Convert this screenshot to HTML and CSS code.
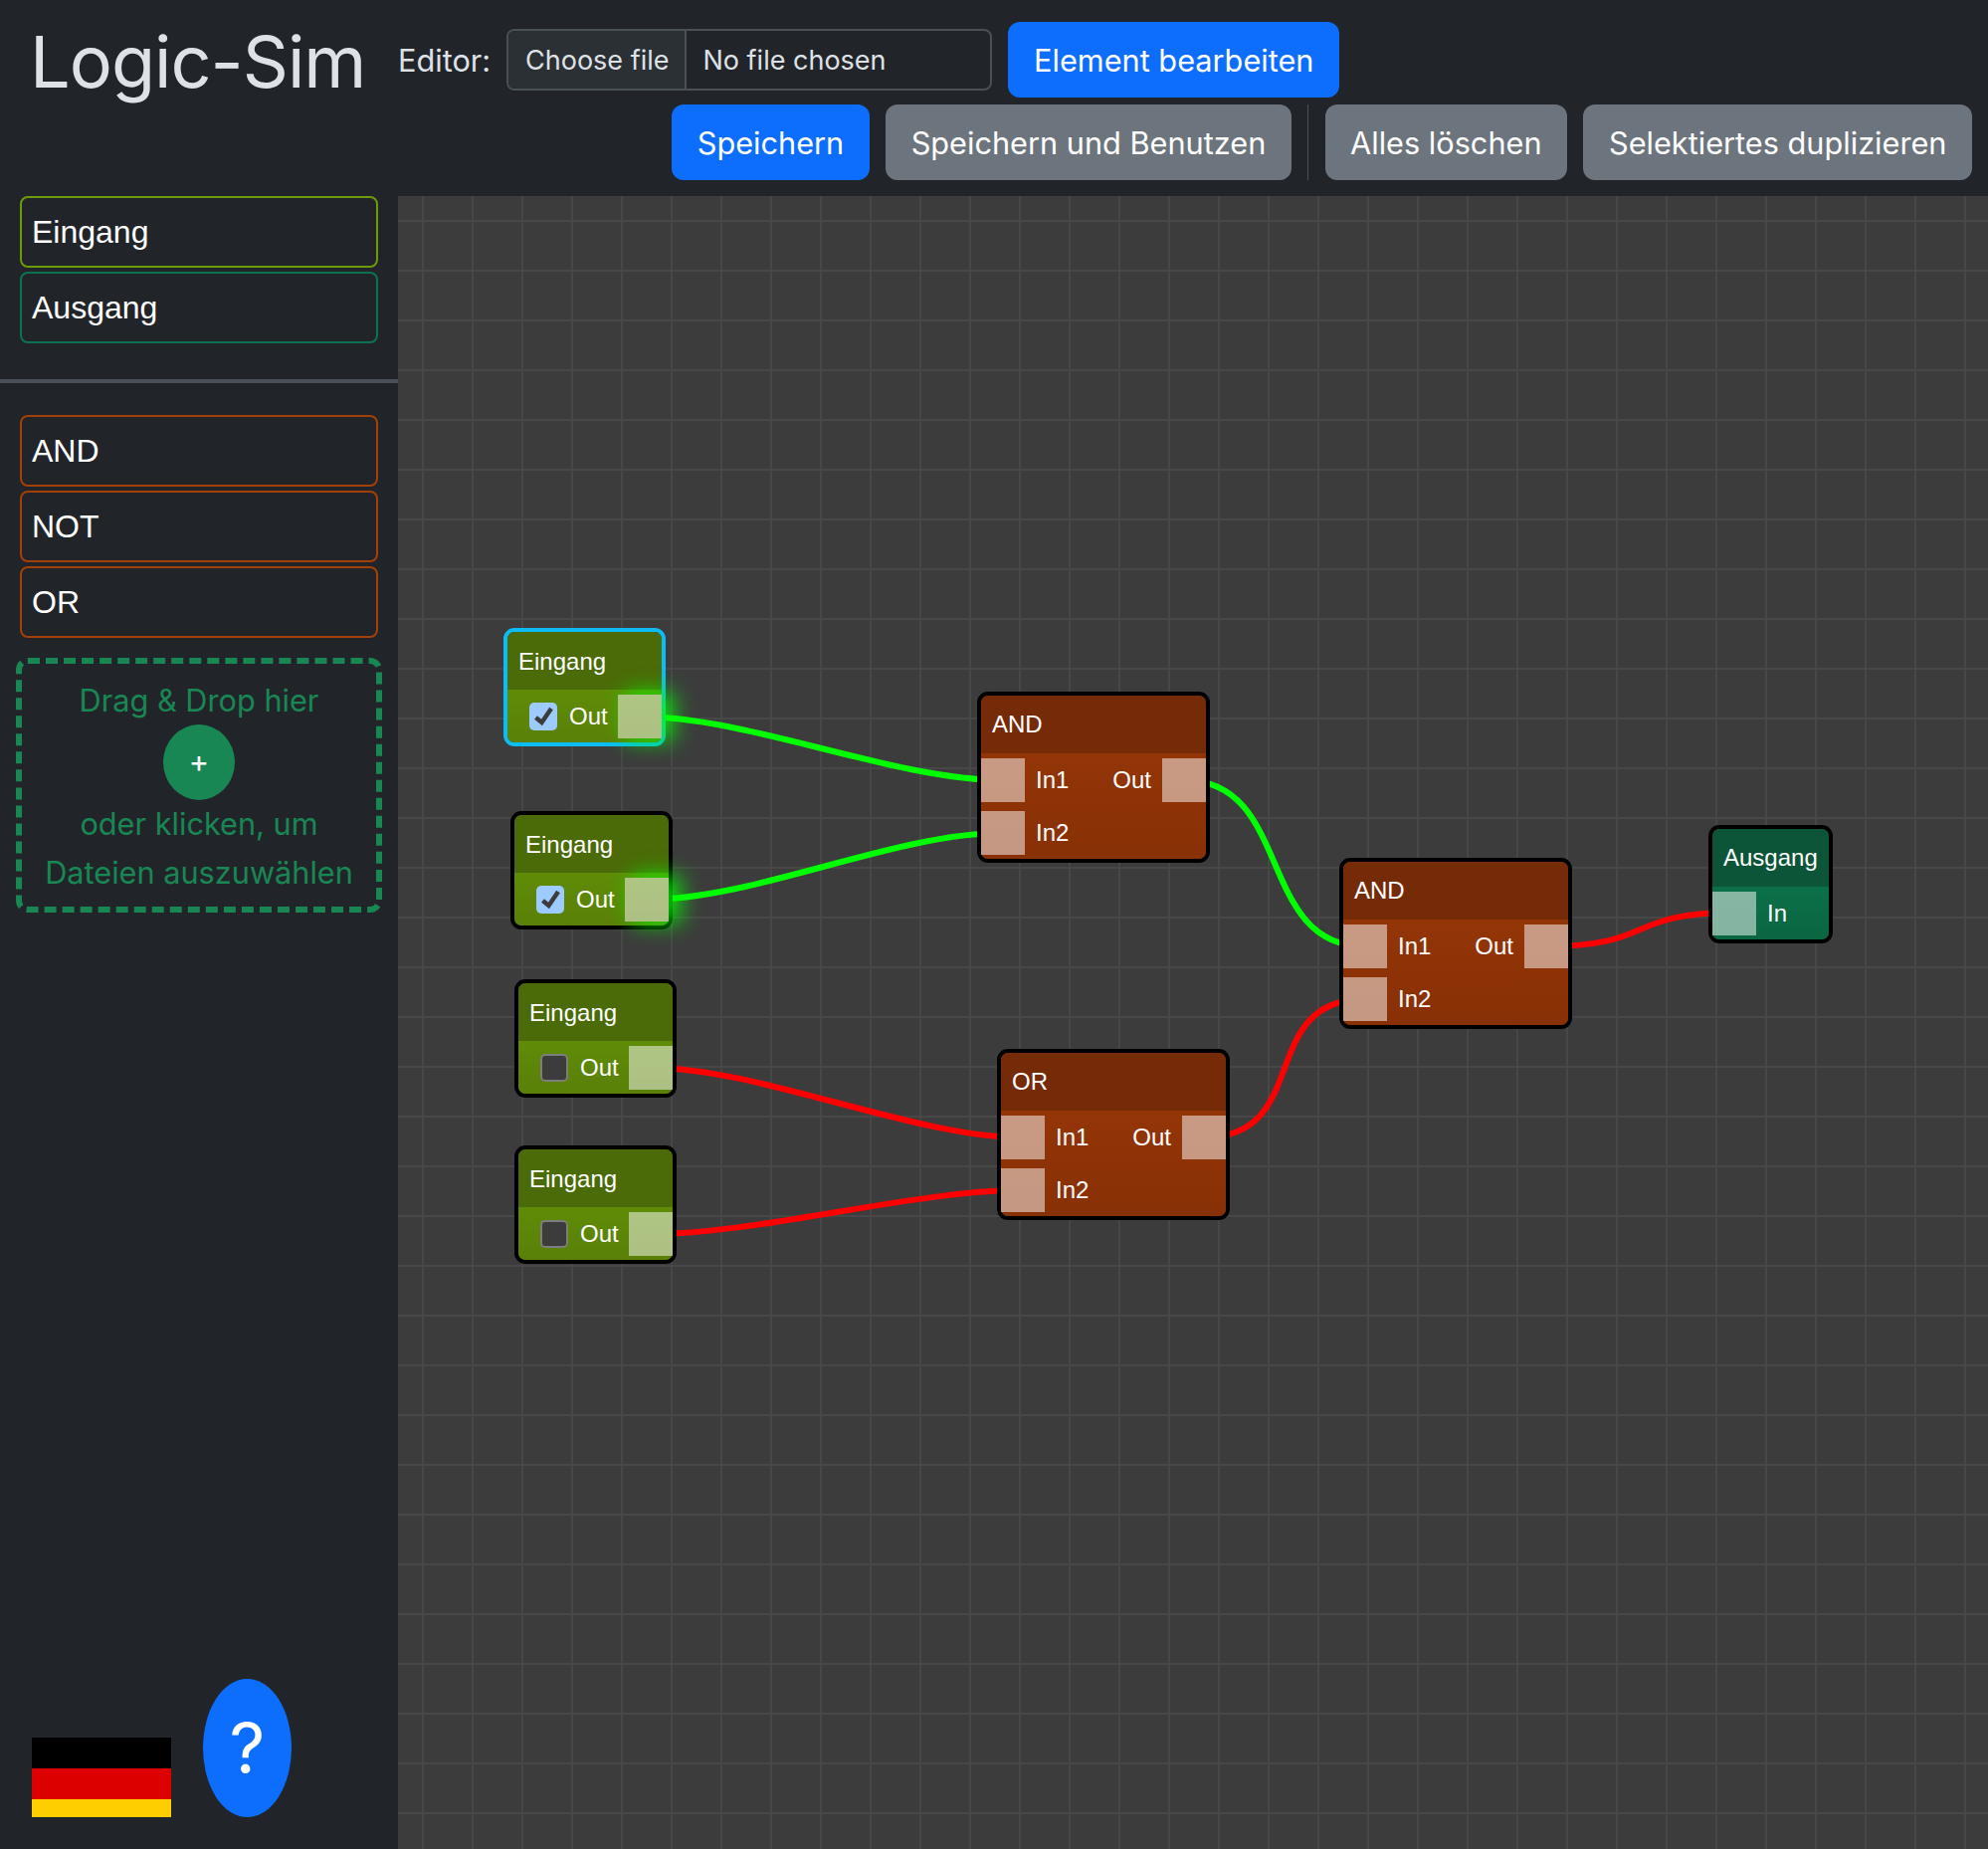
FILE: index.html
```html
<!DOCTYPE html>
<html lang="en">

<head>
    <meta charset="UTF-8">
    <meta name="viewport" content="width=device-width, initial-scale=1.0">
    <title>Logic-Sim</title>
    <link rel="stylesheet" href="styles.css">
</head>

<body>
    <header class="topbar">
        <h1 class="brand">Logic-Sim</h1>
        <div class="toolbar">
            <div class="toolbar-row">
                <span class="editor-label">Editor:</span>
                <div class="file-input">
                    <span class="file-button">Choose file</span>
                    <span class="file-name">No file chosen</span>
                </div>
                <button class="btn btn-primary" type="button">Element bearbeiten</button>
            </div>
            <div class="toolbar-row toolbar-row-end">
                <button class="btn btn-primary" type="button">Speichern</button>
                <button class="btn btn-secondary" type="button">Speichern und Benutzen</button>
                <span class="toolbar-sep"></span>
                <button class="btn btn-secondary" type="button">Alles löschen</button>
                <button class="btn btn-secondary" type="button">Selektiertes duplizieren</button>
            </div>
        </div>
    </header>

    <main class="workspace">
        <aside class="sidebar">
            <div class="palette">
                <div class="palette-item item-input">Eingang</div>
                <div class="palette-item item-output">Ausgang</div>
            </div>
            <hr class="sidebar-rule">
            <div class="palette">
                <div class="palette-item item-gate">AND</div>
                <div class="palette-item item-gate">NOT</div>
                <div class="palette-item item-gate">OR</div>
            </div>
            <div class="dropzone">
                <span>Drag &amp; Drop hier</span>
                <span class="dropzone-plus">+</span>
                <span>oder klicken, um</span>
                <span class="dropzone-last">Dateien auszuwählen</span>
            </div>
            <div class="sidebar-footer">
                <svg class="flag" viewBox="0 0 140 80" role="img" aria-label="Deutsch">
                    <rect width="140" height="31" fill="#000"></rect>
                    <rect y="31" width="140" height="31" fill="#dd0000"></rect>
                    <rect y="62" width="140" height="18" fill="#ffce00"></rect>
                </svg>
                <button class="help" type="button">?</button>
            </div>
        </aside>

        <section class="canvas">
            <svg class="wires" width="1598" height="1661">
                <!-- canvas starts at 400,197 -->
                <g transform="translate(-400 -197)">
                    <path class="wire wire-on" d="M643 720 C753 720 898 784 1008 784"></path>
                    <path class="wire wire-on" d="M650 904 C760 904 898 837 1008 837"></path>
                    <path class="wire wire-off" d="M654 1073 C764 1073 918 1143 1028 1143"></path>
                    <path class="wire wire-off" d="M654 1240 C764 1240 918 1196 1028 1196"></path>
                    <path class="wire wire-on" d="M1190 784 C1300 784 1262 951 1372 951"></path>
                    <path class="wire wire-off" d="M1210 1143 C1320 1143 1262 1004 1372 1004"></path>
                    <path class="wire wire-off" d="M1554 951 C1664 951 1633 917 1743 917"></path>
                </g>
            </svg>

            <div class="node node-input node-selected" id="input-1">
                <div class="node-title">Eingang</div>
                <div class="node-body">
                    <div class="node-row row-input">
                        <span class="check check-on"><svg viewBox="0 0 28 28"><path d="M6.5 15l6 5 9.5-14"></path></svg></span>
                        <span class="port-label">Out</span>
                        <span class="port port-right port-on"></span>
                    </div>
                </div>
            </div>

            <div class="node node-input" id="input-2">
                <div class="node-title">Eingang</div>
                <div class="node-body">
                    <div class="node-row row-input">
                        <span class="check check-on"><svg viewBox="0 0 28 28"><path d="M6.5 15l6 5 9.5-14"></path></svg></span>
                        <span class="port-label">Out</span>
                        <span class="port port-right port-on"></span>
                    </div>
                </div>
            </div>

            <div class="node node-input" id="input-3">
                <div class="node-title">Eingang</div>
                <div class="node-body">
                    <div class="node-row row-input">
                        <span class="check"></span>
                        <span class="port-label">Out</span>
                        <span class="port port-right"></span>
                    </div>
                </div>
            </div>

            <div class="node node-input" id="input-4">
                <div class="node-title">Eingang</div>
                <div class="node-body">
                    <div class="node-row row-input">
                        <span class="check"></span>
                        <span class="port-label">Out</span>
                        <span class="port port-right"></span>
                    </div>
                </div>
            </div>

            <div class="node node-gate" id="gate-and-1">
                <div class="node-title">AND</div>
                <div class="node-body">
                    <div class="node-row">
                        <span class="port"></span>
                        <span class="port-label label-in">In1</span>
                        <span class="port-label label-out">Out</span>
                        <span class="port"></span>
                    </div>
                    <div class="node-row">
                        <span class="port"></span>
                        <span class="port-label label-in">In2</span>
                    </div>
                </div>
            </div>

            <div class="node node-gate" id="gate-or">
                <div class="node-title">OR</div>
                <div class="node-body">
                    <div class="node-row">
                        <span class="port"></span>
                        <span class="port-label label-in">In1</span>
                        <span class="port-label label-out">Out</span>
                        <span class="port"></span>
                    </div>
                    <div class="node-row">
                        <span class="port"></span>
                        <span class="port-label label-in">In2</span>
                    </div>
                </div>
            </div>

            <div class="node node-gate" id="gate-and-2">
                <div class="node-title">AND</div>
                <div class="node-body">
                    <div class="node-row">
                        <span class="port"></span>
                        <span class="port-label label-in">In1</span>
                        <span class="port-label label-out">Out</span>
                        <span class="port"></span>
                    </div>
                    <div class="node-row">
                        <span class="port"></span>
                        <span class="port-label label-in">In2</span>
                    </div>
                </div>
            </div>

            <div class="node node-output" id="output-1">
                <div class="node-title">Ausgang</div>
                <div class="node-body">
                    <div class="node-row">
                        <span class="port"></span>
                        <span class="port-label label-in">In</span>
                    </div>
                </div>
            </div>
        </section>
    </main>
</body>

</html>
```

FILE: styles.css
```css
* {
    box-sizing: border-box;
}

body {
    margin: 0;
    width: 1998px;
    height: 1858px;
    overflow: hidden;
    display: flex;
    flex-direction: column;
    background-color: #212529;
    color: #dee2e6;
    font-family: Inter, "Noto Sans", sans-serif;
}

/* top bar */
.topbar {
    display: flex;
    height: 197px;
    flex: none;
}

.brand {
    width: 400px;
    flex: none;
    margin: 0;
    padding: 18px 0 0 30px;
    font-size: 72px;
    font-weight: 400;
    line-height: 88px;
    letter-spacing: -1px;
}

.toolbar {
    flex: 1;
    display: flex;
    flex-direction: column;
    gap: 7px;
    padding: 22px 16px 0 0;
}

.toolbar-row {
    display: flex;
    align-items: center;
    height: 76px;
}

.toolbar-row-end {
    justify-content: flex-end;
    gap: 16.4px;
}

.editor-label {
    width: 109px;
    font-size: 30.7px;
}

.file-input {
    display: flex;
    align-items: center;
    width: 488px;
    height: 62px;
    margin-right: 16px;
    border: 2px solid #495057;
    border-radius: 8px;
    font-size: 27px;
    overflow: hidden;
}

.file-button {
    display: flex;
    align-items: center;
    height: 100%;
    padding: 1px 16px 0 17px;
    background-color: #2b3035;
    border-right: 2px solid #495057;
}

.file-name {
    padding: 1px 0 0 16px;
}

.btn {
    height: 76px;
    padding: 0 26px;
    border: 0;
    border-radius: 12px;
    color: #fff;
    font-family: inherit;
    font-size: 30.7px;
}

.toolbar-row-end .btn {
    padding: 0 25.5px;
}

.btn-primary {
    background-color: #0d6efd;
}

.btn-secondary {
    background-color: #6c757d;
}

.toolbar-sep {
    width: 1px;
    height: 76px;
    background-color: #495057;
}

/* sidebar */
.workspace {
    flex: 1;
    display: flex;
    min-height: 0;
}

.sidebar {
    width: 400px;
    flex: none;
    display: flex;
    flex-direction: column;
}

.palette {
    display: flex;
    flex-direction: column;
    gap: 4px;
    padding: 0 20px;
}

.palette-item {
    display: flex;
    align-items: center;
    height: 72px;
    padding-left: 10px;
    border: 2px solid;
    border-radius: 8px;
    color: #fff;
    font-family: "Liberation Sans", Arial, sans-serif;
    font-size: 32px;
}

.item-input {
    border-color: #6c9a0b;
}

.item-output {
    border-color: #0b7350;
}

.item-gate {
    border-color: #a33f08;
}

.sidebar-rule {
    width: 100%;
    height: 4px;
    margin: 36px 0 32px;
    border: 0;
    background-color: #495057;
}

.dropzone {
    display: flex;
    flex-direction: column;
    align-items: center;
    height: 256px;
    margin: 20px 16px 0;
    padding-top: 13px;
    border: 6px dashed #198754;
    border-radius: 12px;
    color: #198754;
    font-size: 30.7px;
    line-height: 48.5px;
}

.dropzone-plus {
    display: flex;
    align-items: center;
    justify-content: center;
    width: 72px;
    height: 76px;
    margin: -1px 0 0;
    border-radius: 50%;
    background-color: #198754;
    color: #fff;
}

.dropzone-last {
    margin-top: 1px;
}

.sidebar-footer {
    margin-top: auto;
    display: flex;
    align-items: flex-end;
    gap: 32px;
    padding: 0 0 32px 32px;
}

.flag {
    display: block;
    width: 140px;
    height: 80px;
}

.help {
    width: 89px;
    height: 139px;
    padding: 0;
    border: 0;
    border-radius: 50%;
    background-color: #0d6efd;
    color: #fff;
    font-family: inherit;
    font-size: 70px;
}

/* canvas and nodes */
.canvas {
    flex: 1;
    position: relative;
    overflow: hidden;
    background-color: #3c3c3c;
    background-image:
        linear-gradient(to right, #474747 2px, transparent 2px),
        linear-gradient(to bottom, #474747 2px, transparent 2px);
    background-size: 50px 50px;
    background-position: 24px 24px;
}

.wires {
    position: absolute;
    left: 0;
    top: 0;
}

.wire {
    fill: none;
    stroke-width: 6;
}

.wire-on {
    stroke: #00ff00;
}

.wire-off {
    stroke: #ff0000;
}

.node {
    position: absolute;
    border: 4px solid #000;
    border-radius: 11px;
    color: #fff;
    font-family: "Liberation Sans", Arial, sans-serif;
    font-size: 24px;
}

.node-title {
    display: flex;
    align-items: center;
    height: 58px;
    padding-left: 11px;
    border-radius: 7px 7px 0 0;
}

.node-body {
    display: flex;
    flex-direction: column;
    gap: 9px;
    padding: 5px 0 4px;
    border-radius: 0 0 7px 7px;
}

.node-row {
    display: flex;
    align-items: center;
    height: 44px;
}

.row-input {
    padding-left: 22px;
}

.port {
    width: 44px;
    height: 44px;
    flex: none;
    background-color: rgba(255, 255, 255, 0.5);
}

.port-right {
    margin-left: auto;
}

.port-on {
    box-shadow: 10px 0 22px 2px rgba(0, 255, 0, 0.85);
}

.label-in {
    padding-left: 11px;
}

.label-out {
    margin-left: auto;
    margin-right: 11px;
}

.check {
    width: 28px;
    height: 28px;
    flex: none;
    margin-right: 12px;
    border: 2px solid #7d7d7d;
    border-radius: 5px;
    background-color: #3c3c3c;
}

.check-on {
    border: 0;
    background-color: #9ecbff;
}

.check svg {
    display: block;
    width: 28px;
    height: 28px;
}

.check path {
    fill: none;
    stroke: #3c3c3c;
    stroke-width: 4.5;
}

.node-input {
    width: 163px;
}

.node-gate {
    width: 234px;
}

.node-output {
    width: 125px;
}

.node-input .node-title {
    padding-top: 1px;
    background-color: #4b6a08;
}

.node-input .node-body {
    height: 53px;
    background: linear-gradient(#5f8c07, #5a8008);
}

.node-gate .node-title {
    background-color: #752a08;
}

.node-gate .node-body {
    background: linear-gradient(#933507, #883006);
}

.node-output .node-title {
    background-color: #0c5539;
}

.node-output .node-body {
    background: linear-gradient(#0b7048, #0b6642);
}

.node-selected {
    border-color: #0dbcf2;
}

#input-1 {
    left: 106px;
    top: 434px;
}

#input-2 {
    left: 113px;
    top: 618px;
}

#input-3 {
    left: 117px;
    top: 787px;
}

#input-4 {
    left: 117px;
    top: 954px;
}

#gate-and-1 {
    left: 582px;
    top: 498px;
}

#gate-or {
    left: 602px;
    top: 857px;
}

#gate-and-2 {
    left: 946px;
    top: 665px;
}

#output-1 {
    left: 1317px;
    top: 632px;
}
```
